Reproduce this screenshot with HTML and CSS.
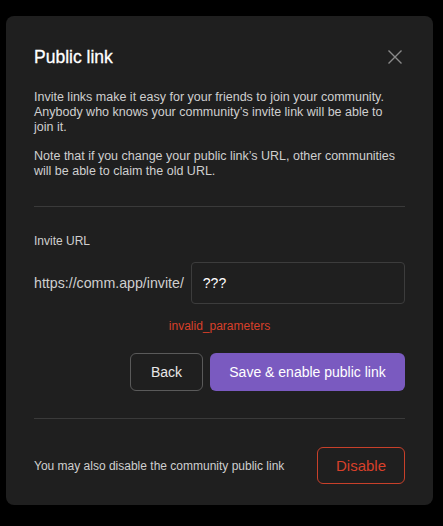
FILE: index.html
```html
<!DOCTYPE html>
<html>
<head>
<meta charset="utf-8">
<link rel="stylesheet" href="styles.css">
</head>
<body>
<div class="backdrop">
  <div class="modal">
    <div class="modal-header">
      <h1 class="title">Public link</h1>
      <button class="close" aria-label="Close">
        <svg width="16" height="16" viewBox="0 0 16 16"><path d="M1.5 1.5 L14.5 14.5 M14.5 1.5 L1.5 14.5" stroke="#8a8a8a" stroke-width="1.4" fill="none"/></svg>
      </button>
    </div>
    <div class="intro">
      <p>Invite links make it easy for your friends to join your community. Anybody who knows your community’s invite link will be able to join it.</p>
      <p>Note that if you change your public link’s URL, other communities will be able to claim the old URL.</p>
    </div>
    <hr class="divider">
    <div class="form">
      <div class="label">Invite URL</div>
      <div class="url-row">
        <span class="prefix">https://comm.app/invite/</span>
        <div class="input">???</div>
      </div>
      <div class="error">invalid_parameters</div>
      <div class="actions">
        <button class="btn btn-back">Back</button>
        <button class="btn btn-save">Save &amp; enable public link</button>
      </div>
    </div>
    <hr class="divider divider-bottom">
    <div class="footer">
      <span class="footer-text">You may also disable the community public link</span>
      <button class="btn btn-disable">Disable</button>
    </div>
  </div>
</div>
</body>
</html>
```
FILE: styles.css
```css
* { box-sizing: border-box; }
html, body { margin: 0; padding: 0; }
body {
  background: #000;
  font-family: "Liberation Sans", Arial, sans-serif;
  width: 443px;
  height: 526px;
  overflow: hidden;
}
.backdrop {
  width: 443px;
  height: 526px;
  padding: 16px 0 0 6px;
}
.modal {
  width: 427px;
  height: 489px;
  background: #1f1f1f;
  border-radius: 8px;
  padding: 0 28px;
}
.modal-header {
  display: flex;
  align-items: center;
  justify-content: space-between;
  padding-top: 29px;
}
.title {
  margin: 0;
  font-size: 17.5px;
  line-height: 24px;
  font-weight: 400;
  color: #fff;
  -webkit-text-stroke: 0.3px #fff;
}
.close {
  background: none;
  border: 0;
  padding: 0;
  margin-right: 2px;
  width: 16px;
  height: 16px;
  display: flex;
}
.intro {
  margin-top: 21px;
  font-size: 12.5px;
  line-height: 15px;
  color: #cfcfcf;
}
.intro p { margin: 0 0 14px; }
.intro p:last-child { margin-bottom: 0; }
.divider {
  margin: 27px 0 0;
  border: 0;
  border-top: 1px solid #3a3a3a;
  height: 0;
}
.form { padding-top: 27px; }
.label {
  font-size: 12px;
  line-height: 15px;
  color: #cfcfcf;
}
.url-row {
  display: flex;
  align-items: center;
  gap: 7px;
  margin-top: 13px;
}
.prefix {
  font-size: 14.2px;
  color: #cfcfcf;
}
.input {
  flex: 1;
  height: 42px;
  border: 1px solid #3c3c3c;
  border-radius: 4px;
  padding: 0 11px;
  display: flex;
  align-items: center;
  font-size: 14px;
  color: #fff;
}
.error {
  text-align: center;
  margin-top: 15px;
  font-size: 12px;
  line-height: 15px;
  color: #d8402a;
}
.actions {
  display: flex;
  justify-content: flex-end;
  gap: 7px;
  margin-top: 19px;
}
.btn {
  font-family: inherit;
  border-radius: 6px;
  background: none;
  height: 38px;
  font-size: 14px;
  padding: 0;
  cursor: pointer;
}
.btn-back {
  border: 1px solid #5a5a5a;
  color: #e8e8e8;
  width: 73px;
}
.btn-save {
  border: 0;
  background: #7a5ac0;
  color: #fff;
  width: 195px;
}
.divider-bottom { margin-top: 27px; }
.footer {
  display: flex;
  align-items: center;
  justify-content: space-between;
  padding-top: 28px;
}
.footer-text {
  font-size: 12px;
  color: #cfcfcf;
}
.btn-disable {
  border: 1px solid #c8402a;
  color: #d8402a;
  width: 88px;
  height: 37px;
  font-size: 15px;
}
```
